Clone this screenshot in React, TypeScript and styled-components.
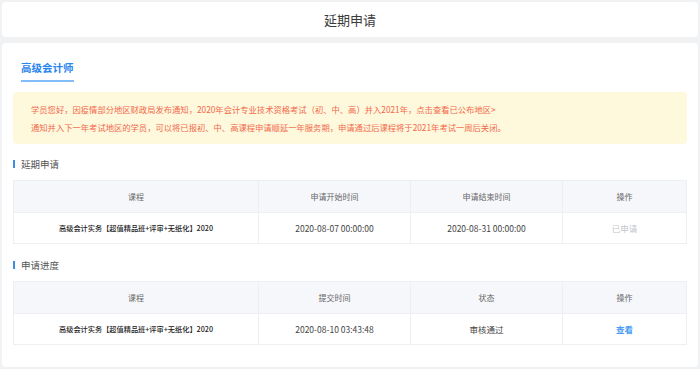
import styled, { createGlobalStyle } from "styled-components";

const GlobalStyle = createGlobalStyle`
  html, body {
    margin: 0;
    padding: 0;
    background-color: #f1f2f4;
    font-family: "Noto Sans CJK SC", "Noto Sans", "Liberation Sans", sans-serif;
    color: #333;
  }
`;

const Page = styled.div`
  padding: 2px 2px 2px 2px;
  display: flex;
  flex-direction: column;
  gap: 6px;
`;

const HeaderCard = styled.header`
  height: 35px;
  background-color: #fff;
  border-radius: 4px;
  display: flex;
  align-items: center;
  justify-content: center;
  font-size: 13px;
  color: #3a3a3a;
`;

const Card = styled.main`
  background-color: #fff;
  border-radius: 4px;
  padding: 18px 11px 22px;
  display: flex;
  flex-direction: column;
`;

const Tabs = styled.div`
  display: flex;
  padding-left: 8px;
`;

const Tab = styled.div<{ $active?: boolean }>`
  font-size: 10.5px;
  line-height: 14px;
  font-weight: bold;
  color: ${(props) => (props.$active ? "#2a86ef" : "#666")};
  padding-bottom: 5px;
  border-bottom: 2px solid ${(props) => (props.$active ? "#82bdfb" : "transparent")};
`;

const Notice = styled.div`
  margin-top: 10px;
  background-color: #fef8dd;
  border-radius: 4px;
  padding: 9px 18px 8px;
  color: #f2694a;
  font-size: 8.3px;
  line-height: 17.6px;
`;

const SectionTitle = styled.h3<{ $top: string }>`
  margin: ${(props) => props.$top} 0 0;
  display: flex;
  align-items: center;
  gap: 6px;
  height: 12px;
  font-size: 9.5px;
  font-weight: normal;
  color: #555;

  &::before {
    content: "";
    width: 2px;
    height: 8px;
    background-color: #3a8ee6;
  }
`;

const Table = styled.table`
  margin-top: 10px;
  width: 100%;
  border-collapse: collapse;
  table-layout: fixed;
  border: 1px solid #edeff3;
`;

const HeadCell = styled.th`
  height: 31px;
  background-color: #f6f7fb;
  border: 1px solid #edeff3;
  font-size: 8px;
  font-weight: normal;
  color: #666;
  text-align: center;
  padding: 0;
`;

const Cell = styled.td<{ $tone?: "course" | "muted" | "link" }>`
  height: 30px;
  border: 1px solid #edeff3;
  text-align: center;
  padding: 0;
  font-size: ${(props) => (props.$tone === "course" ? "7.2px" : "8.5px")};
  font-weight: ${(props) => (props.$tone === "course" ? 500 : props.$tone === "link" ? "bold" : "normal")};
  color: ${(props) =>
    props.$tone === "muted" ? "#c3c6cc" : props.$tone === "link" ? "#4a9bf5" : props.$tone === "course" ? "#222" : "#444"};
`;

const Columns = () => (
  <colgroup>
    <col style={{ width: 245 }} />
    <col style={{ width: 152 }} />
    <col style={{ width: 152 }} />
    <col />
  </colgroup>
);

const course = "高级会计实务【超值精品班+评审+无纸化】2020";

export default function App() {
  return (
    <>
      <GlobalStyle />
      <Page>
        <HeaderCard>延期申请</HeaderCard>
        <Card>
          <Tabs>
            <Tab $active>高级会计师</Tab>
          </Tabs>
          <Notice>
            <div>学员您好，因疫情部分地区财政局发布通知，2020年会计专业技术资格考试（初、中、高）并入2021年，点击查看已公布地区&gt;</div>
            <div>通知并入下一年考试地区的学员，可以将已报初、中、高课程申请顺延一年服务期，申请通过后课程将于2021年考试一周后关闭。</div>
          </Notice>

          <SectionTitle $top="14px">延期申请</SectionTitle>
          <Table>
            <Columns />
            <thead>
              <tr>
                <HeadCell>课程</HeadCell>
                <HeadCell>申请开始时间</HeadCell>
                <HeadCell>申请结束时间</HeadCell>
                <HeadCell>操作</HeadCell>
              </tr>
            </thead>
            <tbody>
              <tr>
                <Cell $tone="course">{course}</Cell>
                <Cell>2020-08-07 00:00:00</Cell>
                <Cell>2020-08-31 00:00:00</Cell>
                <Cell $tone="muted">已申请</Cell>
              </tr>
            </tbody>
          </Table>

          <SectionTitle $top="15px">申请进度</SectionTitle>
          <Table>
            <Columns />
            <thead>
              <tr>
                <HeadCell>课程</HeadCell>
                <HeadCell>提交时间</HeadCell>
                <HeadCell>状态</HeadCell>
                <HeadCell>操作</HeadCell>
              </tr>
            </thead>
            <tbody>
              <tr>
                <Cell $tone="course">{course}</Cell>
                <Cell>2020-08-10 03:43:48</Cell>
                <Cell>审核通过</Cell>
                <Cell $tone="link">查看</Cell>
              </tr>
            </tbody>
          </Table>
        </Card>
      </Page>
    </>
  );
}
